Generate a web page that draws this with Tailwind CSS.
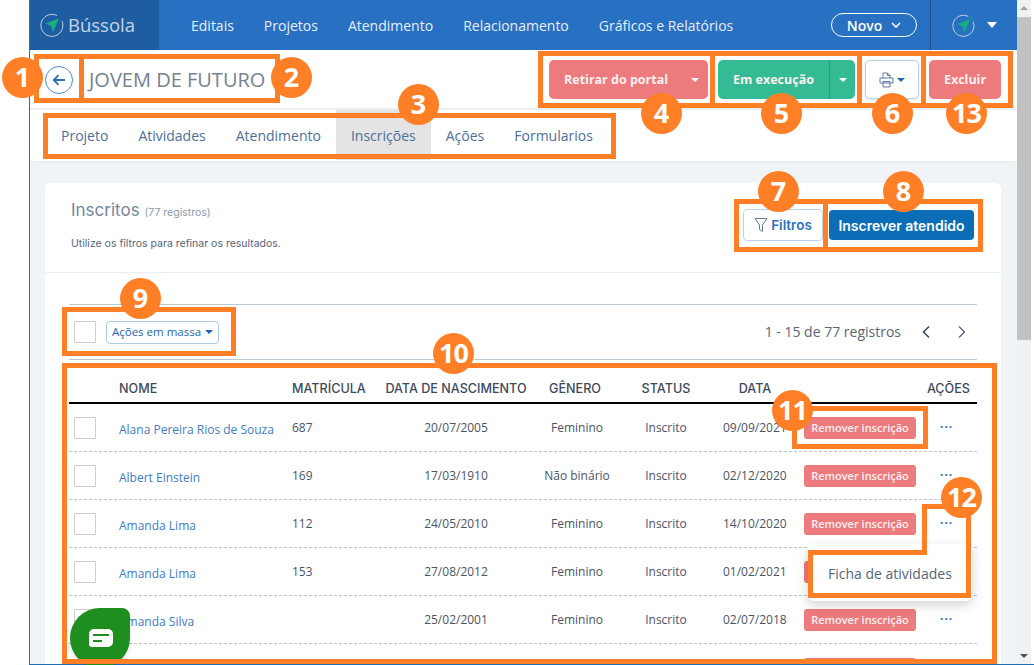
<!DOCTYPE html>
<html lang="pt-BR">
<head>
<meta charset="utf-8">
<title>Bússola</title>
<script src="https://cdn.jsdelivr.net/npm/@tailwindcss/browser@4"></script>
</head>
<body class="bg-white">
<div class="relative w-[1034px] h-[665px] overflow-hidden flex bg-white font-['Open_Sans',sans-serif]">
  <div class="w-[29px] shrink-0 bg-white"></div>
  <main class="w-[988px] h-[664px] overflow-hidden border-l border-[#1f6fb5] bg-[#f0f4f7]">
    <nav class="h-[50px] flex items-center bg-[#2870c2] text-[14px] text-[#e6eef8]">
      <div class="w-[129px] h-full bg-[#1f5da3] flex items-center pl-[10px] gap-[4px]">
        <svg width="24" height="24" viewBox="0 0 24 24" fill="none"><path d="M17 2.6A11 11 0 1 0 22 8" stroke="#c3d0de" stroke-width="1"/><path d="M19 5.5 5.5 10.5 11 13 13 19z" fill="#14b07f"/></svg>
        <span class="text-[18.5px] leading-none text-[#c6d4e4]">Bússola</span>
      </div>
      <div class="flex gap-[30px] ml-[32px]">
        <span>Editais</span><span>Projetos</span><span>Atendimento</span><span>Relacionamento</span><span>Gráficos e Relatórios</span>
      </div>
      <div class="ml-auto w-[86px] h-[24px] rounded-full border border-white flex items-center justify-center gap-[9px] font-semibold text-white">
        <span>Novo</span>
        <svg width="10" height="7" viewBox="0 0 10 7" fill="none"><path d="M1 1l4 4 4-4" stroke="white" stroke-width="1.6"/></svg>
      </div>
      <div class="ml-[13px] mr-[20px] h-full w-[67px] border-l border-[#1f4f8a] flex items-center pl-[21px] gap-[12px]">
        <svg width="27" height="27" viewBox="0 0 24 24" fill="none"><path d="M17 2.6A11 11 0 1 0 22 8" stroke="#c3d0de" stroke-width="1"/><path d="M19 5.5 5.5 10.5 11 13 13 19z" fill="#14b07f"/><circle cx="20" cy="4" r="1" fill="#14b07f"/></svg>
        <span class="w-0 h-0 border-x-[5px] border-x-transparent border-t-[6px] border-t-white"></span>
      </div>
    </nav>

    <header class="h-[60px] pt-px bg-white border-b-2 border-[#e9eff3] flex items-center pl-[15px] pr-[16px]">
      <button class="w-[28px] h-[28px] rounded-full border border-[#4a90d6] flex items-center justify-center">
        <svg width="14" height="12" viewBox="0 0 14 12" fill="none"><path d="M13 6H2M6.5 1.2 1.8 6l4.7 4.8" stroke="#2870b8" stroke-width="1.8"/></svg>
      </button>
      <h1 class="ml-[16px] text-[20px] text-[#75828f] leading-none">JOVEM DE FUTURO</h1>
      <div class="ml-auto flex items-center gap-[10px] text-[12.5px] font-bold text-[#fdf0f0]">
        <button class="w-[159px] h-[39px] rounded-[5px] bg-[#ed7a7c] flex items-center pl-[15px] pr-[9px] justify-between">
          <span class="pt-[2px]">Retirar do portal</span><span class="w-0 h-0 border-x-[4px] border-x-transparent border-t-[4px] border-t-white"></span>
        </button>
        <button class="w-[137px] h-[39px] rounded-[5px] bg-[#35bb93] flex items-center">
          <span class="w-[111px] pt-[2px] text-center">Em execução</span>
          <span class="flex-1 h-full border-l border-[#2a9d7a] flex items-center justify-center"><span class="w-0 h-0 border-x-[4px] border-x-transparent border-t-[4px] border-t-white"></span></span>
        </button>
        <button class="w-[54px] h-[39px] rounded-[5px] bg-white border border-[#b9d2e8] shadow-sm flex items-center justify-center gap-[3px]">
          <svg width="15" height="16" viewBox="0 0 15 16" fill="none" stroke="#5f7a9f" stroke-width="1"><path d="M4 6V1h4.5L11 3.5V6M8.5 1v2.5H11M1 6h13v5H1zM4 9.5h7v5.5H4z"/></svg>
          <span class="w-0 h-0 border-x-[4px] border-x-transparent border-t-[4px] border-t-[#1f66ad]"></span>
        </button>
        <button class="w-[72px] h-[39px] pt-[2px] rounded-[5px] bg-[#ed7a7c]">Excluir</button>
      </div>
    </header>

    <div class="h-[53px] bg-white border-b-2 border-[#e9eff3] flex pl-[16px] text-[14px] text-[#4d6f9b]">
      <a class="px-[15px] h-[50px] flex items-center">Projeto</a>
      <a class="px-[15px] h-[50px] flex items-center">Atividades</a>
      <a class="px-[15px] h-[50px] flex items-center">Atendimento</a>
      <a class="px-[15px] h-[50px] flex items-center bg-[#e4e4e4]">Inscrições</a>
      <a class="px-[15px] h-[50px] flex items-center">Ações</a>
      <a class="px-[15px] h-[50px] flex items-center">Formularios</a>
    </div>

    <section class="mt-[20px] ml-[15px] w-[956px] rounded-[6px] bg-white pb-[20px]">
      <div class="h-[90px] border-b border-[#e9eff3] flex pl-[26px] pr-[27px]">
        <div class="font-['Inter',sans-serif] pt-[17px]">
          <p class="text-[#75879c] text-[17px] leading-[20px]">Inscritos <span class="text-[10.5px] text-[#8b98a6]">(77 registros)</span></p>
          <p class="mt-[14px] text-[10.5px] leading-[14px] text-[#56657a]">Utilize os filtros para refinar os resultados.</p>
        </div>
        <div class="ml-auto flex items-start gap-[6px] pt-[26px] font-['Inter',sans-serif] font-semibold text-[13.5px]">
          <button class="w-[80px] h-[32px] rounded-[4px] bg-white border border-[#b9d2e8] flex items-center justify-center gap-[3px] text-[#2c72b8]">
            <svg width="14" height="16" viewBox="0 0 14 16" fill="none" stroke="#5f7f9f" stroke-width="1"><path d="M1 1.5h12L8.5 8v6.5l-3-2V8z"/></svg>
            <span>Filtros</span>
          </button>
          <button class="w-[145px] h-[30px] mt-px rounded-[4px] bg-[#0b6db5] text-white text-[14px]">Inscrever atendido</button>
        </div>
      </div>

      <div class="mx-[24px] mt-[31px]">
        <div class="h-[56px] border-y border-[#bcc8d4] flex items-center pl-[5px]">
          <span class="w-[22px] h-[22px] border border-[#d2cfca] bg-white"></span>
          <button class="ml-[10px] w-[113px] h-[23px] rounded-[4px] bg-white border border-[#a9cbe6] text-[11.5px] font-medium text-[#1f66ad] flex items-center justify-center gap-[4px]">
            <span>Ações em massa</span><span class="w-0 h-0 border-x-[4px] border-x-transparent border-t-[4px] border-t-[#1f66ad]"></span>
          </button>
          <span class="ml-auto pb-[2px] text-[14px] text-[#5a6675]">1 - 15 de 77 registros</span>
          <svg class="ml-[20px]" width="10" height="14" viewBox="0 0 10 14" fill="none"><path d="M8 1.5 2.5 7 8 12.5" stroke="#3d4a5a" stroke-width="1.6"/></svg>
          <svg class="ml-[26px] mr-[10px]" width="10" height="14" viewBox="0 0 10 14" fill="none"><path d="M2 1.5 7.5 7 2 12.5" stroke="#5a6675" stroke-width="1.4"/></svg>
        </div>

        <div class="h-[44px] border-b-2 border-black grid grid-cols-[50px_173px_92px_144px_98px_80px_98px_112px_61px] items-center pt-[17px] font-['Inter',sans-serif] text-[12.6px] font-medium text-[#3d4a5c] leading-none whitespace-nowrap">
          <span></span><span>NOME</span><span>MATRÍCULA</span><span class="text-center">DATA DE NASCIMENTO</span><span class="text-center pr-[4px]">GÊNERO</span><span class="text-center">STATUS</span><span class="text-center">DATA</span><span></span><span class="text-right pr-[7px]">AÇÕES</span>
        </div>

        <div class="h-[48px] border-b border-dashed border-[#bcc3d0] grid grid-cols-[50px_173px_92px_144px_98px_80px_98px_112px_61px] items-center text-[12px] text-[#4a5563]">
          <span class="ml-[5px] w-[22px] h-[22px] border border-[#d2cfca]"></span>
          <a class="pt-[5px] text-[#3f7cc0] whitespace-nowrap">Alana Pereira Rios de Souza</a><span>687</span><span class="text-center">20/07/2005</span><span class="text-center">Feminino</span><span class="text-center">Inscrito</span><span class="pl-[17px]">09/09/2021</span>
          <button class="mt-px h-[22px] rounded-[3px] bg-[#ed7a7c] text-[11px] font-semibold text-[#fdf0f0]">Remover inscrição</button>
          <span class="pl-[24px] font-bold tracking-[1px] text-[#3a6ea5] leading-none pb-[2px]">···</span>
        </div>
        <div class="h-[48px] border-b border-dashed border-[#bcc3d0] grid grid-cols-[50px_173px_92px_144px_98px_80px_98px_112px_61px] items-center text-[12px] text-[#4a5563]">
          <span class="ml-[5px] w-[22px] h-[22px] border border-[#d2cfca]"></span>
          <a class="pt-[5px] text-[#3f7cc0] whitespace-nowrap">Albert Einstein</a><span>169</span><span class="text-center">17/03/1910</span><span class="text-center">Não binário</span><span class="text-center">Inscrito</span><span class="pl-[17px]">02/12/2020</span>
          <button class="mt-px h-[22px] rounded-[3px] bg-[#ed7a7c] text-[11px] font-semibold text-[#fdf0f0]">Remover inscrição</button>
          <span class="pl-[24px] font-bold tracking-[1px] text-[#3a6ea5] leading-none pb-[2px]">···</span>
        </div>
        <div class="h-[48px] border-b border-dashed border-[#bcc3d0] grid grid-cols-[50px_173px_92px_144px_98px_80px_98px_112px_61px] items-center text-[12px] text-[#4a5563]">
          <span class="ml-[5px] w-[22px] h-[22px] border border-[#d2cfca]"></span>
          <a class="pt-[5px] text-[#3f7cc0] whitespace-nowrap">Amanda Lima</a><span>112</span><span class="text-center">24/05/2010</span><span class="text-center">Feminino</span><span class="text-center">Inscrito</span><span class="pl-[17px]">14/10/2020</span>
          <button class="mt-px h-[22px] rounded-[3px] bg-[#ed7a7c] text-[11px] font-semibold text-[#fdf0f0]">Remover inscrição</button>
          <span class="pl-[24px] font-bold tracking-[1px] text-[#3a6ea5] leading-none pb-[2px]">···</span>
        </div>
        <div class="h-[48px] border-b border-dashed border-[#bcc3d0] grid grid-cols-[50px_173px_92px_144px_98px_80px_98px_112px_61px] items-center text-[12px] text-[#4a5563]">
          <span class="ml-[5px] w-[22px] h-[22px] border border-[#d2cfca]"></span>
          <a class="pt-[5px] text-[#3f7cc0] whitespace-nowrap">Amanda Lima</a><span>153</span><span class="text-center">27/08/2012</span><span class="text-center">Feminino</span><span class="text-center">Inscrito</span><span class="pl-[17px]">01/02/2021</span>
          <button class="mt-px h-[22px] rounded-[3px] bg-[#ed7a7c]"></button>
          <span></span>
        </div>
        <div class="h-[48px] border-b border-dashed border-[#bcc3d0] grid grid-cols-[50px_173px_92px_144px_98px_80px_98px_112px_61px] items-center text-[12px] text-[#4a5563]">
          <span class="ml-[5px] w-[22px] h-[22px] border border-[#d2cfca]"></span>
          <a class="pt-[5px] text-[#3f7cc0] whitespace-nowrap">Amanda Silva</a><span></span><span class="text-center">25/02/2001</span><span class="text-center">Feminino</span><span class="text-center">Inscrito</span><span class="pl-[17px]">02/07/2018</span>
          <button class="mt-px h-[22px] rounded-[3px] bg-[#ed7a7c] text-[11px] font-semibold text-[#fdf0f0]">Remover inscrição</button>
          <span class="pl-[24px] font-bold tracking-[1px] text-[#3a6ea5] leading-none pb-[2px]">···</span>
        </div>
        <div class="h-[48px] grid grid-cols-[50px_173px_92px_144px_98px_80px_98px_112px_61px] items-center">
          <span></span><span></span><span></span><span></span><span></span><span></span><span></span>
          <button class="mt-px h-[22px] rounded-[3px] bg-[#ed7a7c]"></button>
        </div>
      </div>
    </section>
  </main>

  <aside class="w-[14px] h-[664px] bg-[#f1f1f1] flex flex-col items-center">
    <span class="mt-[6px] w-0 h-0 border-x-[4px] border-x-transparent border-b-[4px] border-b-[#a3a3a3]"></span>
    <span class="mt-[7px] w-full h-[323px] bg-[#c1c1c1]"></span>
    <span class="mt-auto mb-[6px] w-0 h-0 border-x-[4px] border-x-transparent border-t-[4px] border-t-[#505050]"></span>
  </aside>

  <div class="absolute left-[29px] right-0 bottom-0 h-px bg-[#1f6fb5]"></div>

  <!-- menu -->
  <div class="absolute left-[808px] top-[544px] w-[164px] h-[57px] bg-white rounded-[6px] shadow-[0_4px_12px_rgba(0,0,0,0.18)] flex items-center pl-[20px] pt-[2px] text-[14px] text-[#56657a]">Ficha de atividades</div>

  <!-- chat -->
  <button class="absolute left-[70px] top-[608px] w-[60px] h-[60px] bg-[#1e8e1e] rounded-[30px] rounded-tr-[8px] shadow-md flex items-center justify-center pl-[2px]">
    <svg width="24" height="18" viewBox="0 0 24 18"><path d="M5 0H19A5 5 0 0 1 24 5V13A5 5 0 0 1 19 18H3A3 3 0 0 1 0 15V5A5 5 0 0 1 5 0Z" fill="white"/><rect x="4" y="5" width="16" height="2" fill="#1e8e1e"/><rect x="4" y="11" width="9" height="2" fill="#1e8e1e"/></svg>
  </button>

  <!-- annotation frames -->
  <div class="absolute left-[34px] top-[54px] w-[50px] h-[49px] border-[5px] border-[#ff7f27]"></div>
  <div class="absolute left-[79px] top-[54px] w-[201px] h-[49px] border-[5px] border-[#ff7f27]"></div>
  <div class="absolute left-[43px] top-[113px] w-[573px] h-[46px] border-[5px] border-[#ff7f27]"></div>
  <div class="absolute left-[538px] top-[51px] w-[177px] h-[57px] border-[5px] border-[#ff7f27]"></div>
  <div class="absolute left-[710px] top-[51px] w-[152px] h-[57px] border-[5px] border-[#ff7f27]"></div>
  <div class="absolute left-[857px] top-[51px] w-[69px] h-[57px] border-[5px] border-[#ff7f27]"></div>
  <div class="absolute left-[921px] top-[51px] w-[92px] h-[57px] border-[5px] border-[#ff7f27]"></div>
  <div class="absolute left-[734px] top-[199px] w-[94px] h-[53px] border-[5px] border-[#ff7f27]"></div>
  <div class="absolute left-[823px] top-[199px] w-[160px] h-[53px] border-[5px] border-[#ff7f27]"></div>
  <div class="absolute left-[62px] top-[307px] w-[174px] h-[49px] border-[5px] border-[#ff7f27]"></div>
  <div class="absolute left-[62px] top-[363px] w-[935px] h-[301px] border-[5px] border-[#ff7f27]"></div>
  <div class="absolute left-[792px] top-[406px] w-[136px] h-[43px] border-[5px] border-[#ff7f27]"></div>
  <svg class="absolute left-[808px] top-[504px]" width="163" height="94" viewBox="0 0 163 94" fill="none"><path d="M2.5 48.5H116.5V2.5H160.5V91.5H2.5Z" stroke="#ff7f27" stroke-width="5"/></svg>

  <!-- annotation badges -->
  <span class="absolute left-[2px] top-[57px] w-[41px] h-[41px] rounded-full bg-[#ff7f27] text-white text-[27px] font-bold flex items-center justify-center">1</span>
  <span class="absolute left-[271px] top-[57px] w-[41px] h-[41px] rounded-full bg-[#ff7f27] text-white text-[27px] font-bold flex items-center justify-center">2</span>
  <span class="absolute left-[398px] top-[84px] w-[41px] h-[41px] rounded-full bg-[#ff7f27] text-white text-[27px] font-bold flex items-center justify-center">3</span>
  <span class="absolute left-[641px] top-[93px] w-[41px] h-[41px] rounded-full bg-[#ff7f27] text-white text-[27px] font-bold flex items-center justify-center">4</span>
  <span class="absolute left-[761px] top-[93px] w-[41px] h-[41px] rounded-full bg-[#ff7f27] text-white text-[27px] font-bold flex items-center justify-center">5</span>
  <span class="absolute left-[872px] top-[93px] w-[41px] h-[41px] rounded-full bg-[#ff7f27] text-white text-[27px] font-bold flex items-center justify-center">6</span>
  <span class="absolute left-[946px] top-[93px] w-[41px] h-[41px] rounded-full bg-[#ff7f27] text-white text-[27px] font-bold flex items-center justify-center tracking-[-1px]">13</span>
  <span class="absolute left-[758px] top-[171px] w-[41px] h-[41px] rounded-full bg-[#ff7f27] text-white text-[27px] font-bold flex items-center justify-center">7</span>
  <span class="absolute left-[883px] top-[171px] w-[41px] h-[41px] rounded-full bg-[#ff7f27] text-white text-[27px] font-bold flex items-center justify-center">8</span>
  <span class="absolute left-[120px] top-[278px] w-[41px] h-[41px] rounded-full bg-[#ff7f27] text-white text-[27px] font-bold flex items-center justify-center">9</span>
  <span class="absolute left-[433px] top-[333px] w-[41px] h-[41px] rounded-full bg-[#ff7f27] text-white text-[27px] font-bold flex items-center justify-center tracking-[-1px]">10</span>
  <span class="absolute left-[772px] top-[390px] w-[41px] h-[41px] rounded-full bg-[#ff7f27] text-white text-[27px] font-bold flex items-center justify-center tracking-[-1px]">11</span>
  <span class="absolute left-[941px] top-[477px] w-[41px] h-[41px] rounded-full bg-[#ff7f27] text-white text-[27px] font-bold flex items-center justify-center tracking-[-1px]">12</span>
</div>
</body>
</html>
